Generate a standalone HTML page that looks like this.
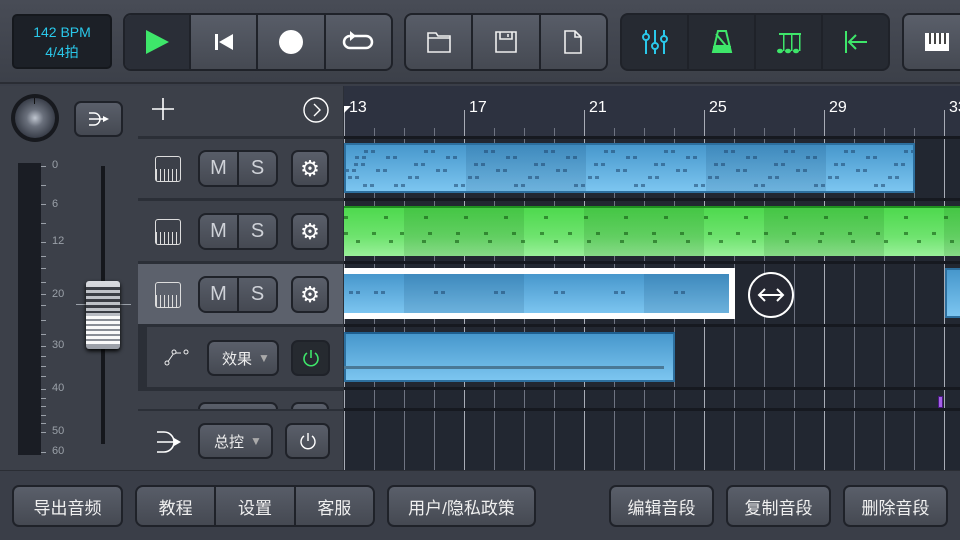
<!DOCTYPE html><html><head><meta charset="utf-8"><style>
*{margin:0;padding:0;box-sizing:border-box}
body{width:960px;height:540px;overflow:hidden;background:#3a3e48;font-family:"Liberation Sans","Noto Sans CJK SC",sans-serif;position:relative}
.a{position:absolute}
.btn{position:absolute;border:2px solid #1f2229;border-radius:7px;background:linear-gradient(#5a5f6a,#454952);color:#eee;display:flex;align-items:center;justify-content:center}
.grp{position:absolute;border:2px solid #1f2229;border-radius:8px;background:linear-gradient(#585d68,#454952);display:flex;overflow:hidden}
.grp>div{flex:1;display:flex;align-items:center;justify-content:center;border-right:2px solid #1f2229}
.grp>div:last-child{border-right:none}
.bb{font-size:17px;color:#f0f0f0}
.lbl{position:absolute;left:52px;font-size:11px;color:#9aa0a8}
.tk{position:absolute;left:41px;width:5px;height:1px;background:#9aa0a8}
.ds{position:absolute;left:0;height:3px;background:repeating-linear-gradient(90deg,rgba(30,70,110,.55) 0 4px,transparent 4px 7px,rgba(30,70,110,.55) 7px 11px,transparent 11px 60px)}
.gear{font-size:22px;color:#fff}
.bl{background:repeating-linear-gradient(90deg,#6f7482 0 1px,transparent 1px 30px)}
.br{background:repeating-linear-gradient(90deg,#a8acb6 0 1px,transparent 1px 120px)}
</style></head><body>
<div class="a" style="left:0;top:0;width:960px;height:84px;background:linear-gradient(#484c56,#3c4049);border-bottom:2px solid #2a2d34"></div>
<div class="a" style="left:12px;top:14px;width:100px;height:55px;background:#1c2027;border:2px solid #15181d;border-radius:5px;color:#2ac8ea;font-size:14px;text-align:center;line-height:20px;padding-top:6px">142 BPM<br>4/4拍</div>
<div class="grp" style="left:123px;top:13px;width:270px;height:58px">
<div style="flex:0 0 66px;background:#2a2e37"><svg width="30" height="30"><polygon points="4,3 27,15 4,27" fill="#3ee66a"/></svg></div>
<div><svg width="24" height="24"><rect x="3" y="4" width="3" height="16" fill="#fff"/><polygon points="21,4 21,20 7,12" fill="#fff"/></svg></div>
<div><svg width="26" height="26"><circle cx="13" cy="13" r="12" fill="#fff"/></svg></div>
<div><svg width="34" height="24"><path d="M12 6 H25 A6 6 0 0 1 25 18 H9 A6 6 0 0 1 9 6" fill="none" stroke="#fff" stroke-width="2.5"/><polygon points="9,1 15,6 9,11" fill="#fff"/></svg></div>
</div>
<div class="grp" style="left:404px;top:13px;width:204px;height:58px">
<div><svg width="28" height="26"><path d="M3 4h8l2 3h12v16H3z M3 9h22" fill="none" stroke="#eee" stroke-width="1.6"/></svg></div>
<div><svg width="26" height="26"><path d="M3 3h20v20H3z M7 3v7h12V3 M15 5v3" fill="none" stroke="#eee" stroke-width="1.6"/></svg></div>
<div><svg width="22" height="26"><path d="M3 2h10l6 6v16H3z M13 2v6h6" fill="none" stroke="#eee" stroke-width="1.6"/></svg></div>
</div>
<div class="grp" style="left:620px;top:13px;width:270px;height:58px;background:#262a32">
<div><svg width="28" height="28"><g stroke="#2ac8ea" stroke-width="2" fill="#262a32"><path d="M5 2v24M14 2v24M23 2v24"/><circle cx="5" cy="9" r="3"/><circle cx="14" cy="18" r="3"/><circle cx="23" cy="11" r="3"/></g></svg></div>
<div><svg width="24" height="26"><path d="M8 2h8l5 21H3z M4 17h16 M6 5l11 13" fill="none" stroke="#3ee66a" stroke-width="2"/><rect x="3" y="17" width="18" height="6" fill="#3ee66a"/></svg></div>
<div><svg width="28" height="26"><g fill="#3ee66a"><rect x="4" y="4" width="22" height="2"/><rect x="8" y="4" width="1.5" height="18"/><rect x="16" y="4" width="1.5" height="18"/><rect x="24" y="4" width="1.5" height="18"/><ellipse cx="5" cy="22" rx="3" ry="2.3"/><ellipse cx="13" cy="22" rx="3" ry="2.3"/><ellipse cx="21" cy="22" rx="3" ry="2.3"/></g></svg></div>
<div><svg width="26" height="26"><path d="M3 2v22 M6 13h18 M13 6l-7 7 7 7" fill="none" stroke="#3ee66a" stroke-width="2"/></svg></div>
</div>
<div class="btn" style="left:902px;top:13px;width:80px;height:58px;justify-content:flex-start;padding-left:20px"><svg width="26" height="22"><rect x="1" y="2" width="24" height="18" fill="#fff"/><g fill="#444"><rect x="5" y="2" width="2" height="11"/><rect x="10" y="2" width="2" height="11"/><rect x="15" y="2" width="2" height="11"/><rect x="20" y="2" width="2" height="11"/></g></svg></div>

<div class="a" style="left:0;top:86px;width:138px;height:384px;background:#3c4049"></div>
<div class="a" style="left:11px;top:94px;width:48px;height:48px;border-radius:50%;background:#17191e"></div>
<div class="a" style="left:15px;top:98px;width:40px;height:40px;border-radius:50%;background:radial-gradient(circle at 50% 50%,#c0c6d0 0,#6a707c 30%,#3a3f4a 70%,#2a2e36 100%)"></div>
<div class="a" style="left:34px;top:98px;width:1px;height:6px;background:#111"></div>
<div class="btn" style="left:74px;top:101px;width:49px;height:36px"><svg width="22" height="16"><path d="M1 2h5a6 6 0 0 1 0 12H1 M1 8h17" fill="none" stroke="#fff" stroke-width="1.4"/><polygon points="15,5 21,8 15,11" fill="#fff"/></svg></div>
<div class="a" style="left:18px;top:163px;width:23px;height:292px;background:#1a1d24"></div>
<div class="tk" style="top:166px"></div><div class="tk" style="top:185px"></div><div class="tk" style="top:204px"></div><div class="tk" style="top:223px"></div><div class="tk" style="top:242px"></div><div class="tk" style="top:256px"></div><div class="tk" style="top:268px"></div><div class="tk" style="top:282px"></div><div class="tk" style="top:294px"></div><div class="tk" style="top:305px"></div><div class="tk" style="top:320px"></div><div class="tk" style="top:334px"></div><div class="tk" style="top:346px"></div><div class="tk" style="top:356px"></div><div class="tk" style="top:366px"></div><div class="tk" style="top:376px"></div><div class="tk" style="top:389px"></div><div class="tk" style="top:398px"></div><div class="tk" style="top:406px"></div><div class="tk" style="top:415px"></div><div class="tk" style="top:423px"></div><div class="tk" style="top:432px"></div><div class="tk" style="top:452px"></div>
<div class="lbl" style="top:159px">0</div><div class="lbl" style="top:198px">6</div><div class="lbl" style="top:235px">12</div><div class="lbl" style="top:288px">20</div><div class="lbl" style="top:339px">30</div><div class="lbl" style="top:382px">40</div><div class="lbl" style="top:425px">50</div><div class="lbl" style="top:445px">60</div>
<div class="a" style="left:101px;top:166px;width:4px;height:278px;background:#15171c"></div>
<div class="a" style="left:76px;top:304px;width:55px;height:1px;background:#9aa0a8"></div>
<div class="a" style="left:86px;top:281px;width:34px;height:68px;border-radius:3px;box-shadow:0 2px 4px #000;overflow:hidden;background:linear-gradient(#d8dadf,#9a9ea6)">
<div style="position:absolute;left:0;top:6px;width:34px;height:26px;background:repeating-linear-gradient(#3a3d44 0 3px,#bfc2c8 3px 6px)"></div>
<div style="position:absolute;left:0;top:35px;width:34px;height:28px;background:repeating-linear-gradient(#fafafa 0 3px,#8a8e96 3px 5px)"></div></div>

<div class="a" style="left:138px;top:86px;width:206px;height:384px;background:#2b2f37"></div>
<div class="a" style="left:138px;top:86px;width:205px;height:50px;background:#3c4049"></div>
<svg class="a" style="left:152px;top:98px" width="22" height="22"><path d="M11 0v22M0 11h22" stroke="#fff" stroke-width="1.6"/></svg>
<svg class="a" style="left:303px;top:97px" width="26" height="26"><circle cx="13" cy="13" r="12" fill="none" stroke="#fff" stroke-width="1.4"/><path d="M11 7l6 6-6 6" fill="none" stroke="#fff" stroke-width="1.4"/></svg>
<div class="a" style="left:138px;top:139px;width:205px;height:59px;background:#3c4049"></div>
<div class="a" style="left:138px;top:201px;width:205px;height:60px;background:#3c4049"></div>
<div class="a" style="left:138px;top:264px;width:205px;height:60px;background:#5c616c"></div>
<div class="a" style="left:147px;top:327px;width:196px;height:60px;background:#3c4049"></div>
<div class="a" style="left:138px;top:391px;width:205px;height:18px;background:#3c4049;overflow:hidden"><div class="btn" style="left:60px;top:11px;width:80px;height:30px"></div><div class="btn" style="left:153px;top:11px;width:38px;height:30px"></div></div>
<div class="a" style="left:138px;top:411px;width:205px;height:59px;background:#3c4049"></div>

<div class="a" style="left:155px;top:156px;width:26px;height:26px;border:1.5px solid #ddd;border-radius:3px;background:repeating-linear-gradient(90deg,#ddd 0 1px,transparent 1px 4px) 0 12px/100% 14px no-repeat"></div>
<div class="a" style="left:155px;top:219px;width:26px;height:26px;border:1.5px solid #ddd;border-radius:3px;background:repeating-linear-gradient(90deg,#ddd 0 1px,transparent 1px 4px) 0 12px/100% 14px no-repeat"></div>
<div class="a" style="left:155px;top:282px;width:26px;height:26px;border:1.5px solid #ddd;border-radius:3px;background:repeating-linear-gradient(90deg,#ddd 0 1px,transparent 1px 4px) 0 12px/100% 14px no-repeat"></div>

<div class="grp" style="left:198px;top:150px;width:80px;height:37px"><div style="color:#cfd2d8;font-size:20px">M</div><div style="color:#cfd2d8;font-size:20px">S</div></div>
<div class="btn gear" style="left:291px;top:150px;width:38px;height:37px">⚙</div>
<div class="grp" style="left:198px;top:213px;width:80px;height:37px"><div style="color:#cfd2d8;font-size:20px">M</div><div style="color:#cfd2d8;font-size:20px">S</div></div>
<div class="btn gear" style="left:291px;top:213px;width:38px;height:37px">⚙</div>
<div class="grp" style="left:198px;top:276px;width:80px;height:37px"><div style="color:#cfd2d8;font-size:20px">M</div><div style="color:#cfd2d8;font-size:20px">S</div></div>
<div class="btn gear" style="left:291px;top:276px;width:38px;height:37px">⚙</div>

<svg class="a" style="left:164px;top:348px" width="26" height="18"><path d="M3 15L10 5H17" fill="none" stroke="#eee" stroke-width="1"/><circle cx="3" cy="15" r="2" fill="#3c4049" stroke="#eee"/><circle cx="10" cy="4" r="2" fill="#3c4049" stroke="#eee"/><circle cx="22" cy="4" r="2" fill="#3c4049" stroke="#eee"/></svg>
<div class="btn" style="left:207px;top:340px;width:72px;height:36px;font-size:15px;justify-content:flex-start;padding-left:13px">效果<span style="color:#aaa;font-size:12px;margin-left:6px">▼</span></div>
<div class="btn" style="left:291px;top:340px;width:39px;height:36px;background:#262a30"><svg width="20" height="20"><path d="M6 5A7 7 0 1 0 14 5 M10 2v8" fill="none" stroke="#3ee66a" stroke-width="1.6"/></svg></div>

<svg class="a" style="left:156px;top:431px" width="26" height="22"><path d="M1 1h7a10 10 0 0 1 0 20H1 M1 11h20" fill="none" stroke="#fff" stroke-width="1.6"/><polygon points="18,7 25,11 18,15" fill="#fff"/></svg>
<div class="btn" style="left:198px;top:423px;width:75px;height:36px;font-size:15px;justify-content:flex-start;padding-left:14px">总控<span style="color:#aaa;font-size:12px;margin-left:6px">▼</span></div>
<div class="btn" style="left:285px;top:423px;width:45px;height:36px"><svg width="20" height="20"><path d="M6 5A7 7 0 1 0 14 5 M10 2v8" fill="none" stroke="#fff" stroke-width="1.4"/></svg></div>

<div class="a" style="left:344px;top:86px;width:616px;height:384px;background:#222731;overflow:hidden">
<div class="a" style="left:0;top:0;width:616px;height:50px;background:#2d3240"></div>
<div class="a bl" style="left:0;top:42px;width:616px;height:342px"></div>
<div class="a br" style="left:0;top:24px;width:616px;height:360px"></div>
<div class="a" style="left:0;top:50px;width:616px;height:3px;background:#161920"></div>
<div class="a" style="left:5px;top:13px;color:#fff;font-size:16px">13</div>
<div class="a" style="left:125px;top:13px;color:#fff;font-size:16px">17</div>
<div class="a" style="left:245px;top:13px;color:#fff;font-size:16px">21</div>
<div class="a" style="left:365px;top:13px;color:#fff;font-size:16px">25</div>
<div class="a" style="left:485px;top:13px;color:#fff;font-size:16px">29</div>
<div class="a" style="left:605px;top:13px;color:#fff;font-size:16px">33</div>
<svg class="a" style="left:0;top:20px" width="8" height="8"><polygon points="0,0 7,0 0,7" fill="#fff"/></svg>
<div class="a" style="left:0;top:112px;width:616px;height:3px;background:#161920"></div>
<div class="a" style="left:0;top:175px;width:616px;height:3px;background:#161920"></div>
<div class="a" style="left:0;top:238px;width:616px;height:3px;background:#161920"></div>
<div class="a" style="left:0;top:301px;width:616px;height:3px;background:#161920"></div>
<div class="a" style="left:0;top:322px;width:616px;height:3px;background:#161920"></div>
<div class="a" style="left:0;top:57px;width:571px;height:50px;background:linear-gradient(#4797cc,#7cc5f0);border:2px solid #2d6f9e;overflow:hidden">
<div class="a" style="left:0;top:0;width:571px;height:50px;background:repeating-linear-gradient(90deg,transparent 0 120px,rgba(0,40,80,.12) 120px 240px)"></div>
<div class="ds" style="top:5px;width:571px;background-position:18px 0"></div>
<div class="ds" style="top:11px;width:571px;background-position:40px 0"></div>
<div class="ds" style="top:18px;width:571px;background-position:8px 0"></div>
<div class="ds" style="top:24px;width:571px;background-position:30px 0"></div>
<div class="ds" style="top:31px;width:571px;background-position:2px 0"></div>
<div class="ds" style="top:39px;width:571px;background-position:48px 0"></div>
</div>
<div class="a" style="left:0;top:120px;width:616px;height:50px;background:linear-gradient(#4ed94e,#6fe36f 60%,#9af09a);border-top:2px solid #1f8f1f;overflow:hidden">
<div class="a" style="left:0;top:0;width:616px;height:50px;background:repeating-linear-gradient(90deg,transparent 0 60px,rgba(0,60,0,.12) 60px 180px)"></div>
<div class="ds" style="top:8px;width:616px;background:repeating-linear-gradient(90deg,rgba(20,90,20,.6) 0 4px,transparent 4px 40px)"></div>
<div class="ds" style="top:24px;width:616px;background:repeating-linear-gradient(90deg,rgba(20,90,20,.6) 0 4px,transparent 4px 28px)"></div>
<div class="ds" style="top:32px;width:616px;background:repeating-linear-gradient(90deg,rgba(20,90,20,.6) 0 4px,transparent 4px 33px);background-position:12px 0"></div>
</div>
<div class="a" style="left:0;top:182px;width:391px;height:51px;background:#fff"></div>
<div class="a" style="left:0;top:188px;width:385px;height:39px;background:linear-gradient(#4797cc,#7cc5f0)"></div>
<div class="a" style="left:60px;top:188px;width:120px;height:39px;background:rgba(0,40,80,.12)"></div>
<div class="a" style="left:300px;top:188px;width:85px;height:39px;background:rgba(0,40,80,.12)"></div>
<div class="ds" style="top:205px;width:385px;background-position:30px 0"></div>
<div class="a" style="left:404px;top:186px;width:46px;height:46px;border-radius:50%;background:#262833;border:2px solid #fff"></div>
<svg class="a" style="left:413px;top:201px" width="28" height="16"><path d="M2 8h24 M8 2l-6 6 6 6 M20 2l6 6-6 6" fill="none" stroke="#fff" stroke-width="2"/></svg>
<div class="a" style="left:601px;top:182px;width:20px;height:50px;background:linear-gradient(#4797cc,#7cc5f0);border:2px solid #2d6f9e"></div>
<div class="a" style="left:0;top:246px;width:331px;height:50px;background:linear-gradient(#4797cc,#7cc5f0);border:2px solid #2d6f9e;border-top-color:#1e5f90"></div>
<div class="a" style="left:0;top:280px;width:320px;height:3px;background:#4a7896"></div>
<div class="a" style="left:594px;top:310px;width:5px;height:12px;background:#a560e8;border:1px solid #4b1a80"></div>
</div>

<div class="a" style="left:0;top:470px;width:960px;height:70px;background:#3a3e48;border-top:1px solid #2a2d34"></div>
<div class="btn bb" style="left:12px;top:485px;width:111px;height:42px">导出音频</div>
<div class="grp bb" style="left:135px;top:485px;width:240px;height:42px"><div>教程</div><div>设置</div><div>客服</div></div>
<div class="btn bb" style="left:387px;top:485px;width:149px;height:42px">用户/隐私政策</div>
<div class="btn bb" style="left:609px;top:485px;width:105px;height:42px">编辑音段</div>
<div class="btn bb" style="left:726px;top:485px;width:105px;height:42px">复制音段</div>
<div class="btn bb" style="left:843px;top:485px;width:105px;height:42px">删除音段</div>
</body></html>
